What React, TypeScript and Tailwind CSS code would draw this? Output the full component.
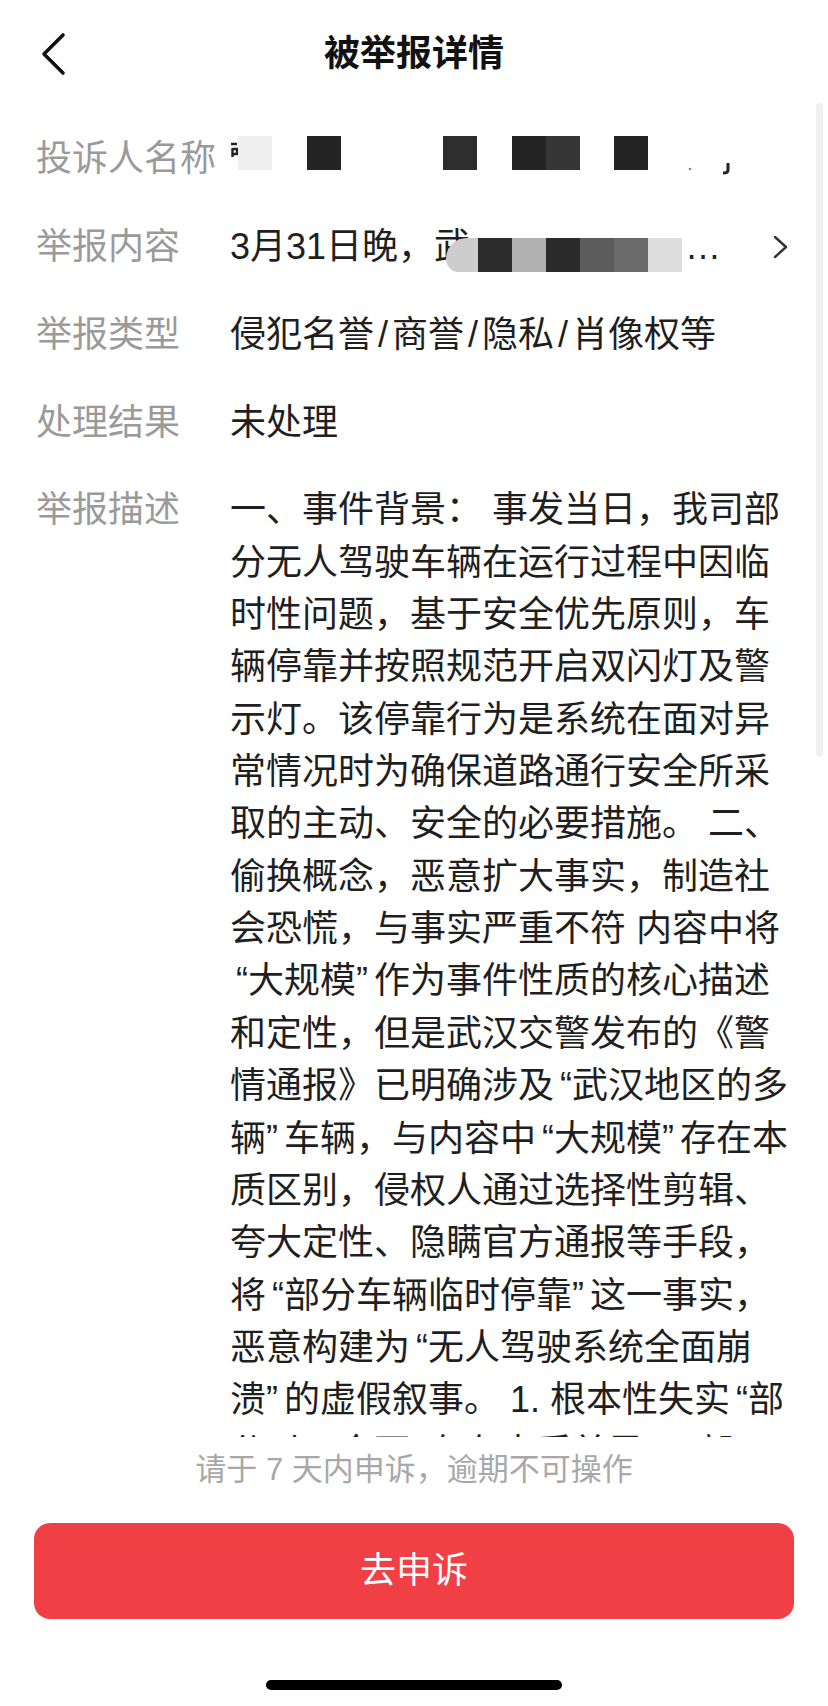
import React from "react";

const descLines = [
  "一、事件背景： 事发当日，我司部",
  "分无人驾驶车辆在运行过程中因临",
  "时性问题，基于安全优先原则，车",
  "辆停靠并按照规范开启双闪灯及警",
  "示灯。该停靠行为是系统在面对异",
  "常情况时为确保道路通行安全所采",
  "取的主动、安全的必要措施。 二、",
  "偷换概念，恶意扩大事实，制造社",
  "会恐慌，与事实严重不符 内容中将",
  "“大规模”作为事件性质的核心描述",
  "和定性，但是武汉交警发布的《警",
  "情通报》已明确涉及“武汉地区的多",
  "辆”车辆，与内容中“大规模”存在本",
  "质区别，侵权人通过选择性剪辑、",
  "夸大定性、隐瞒官方通报等手段，",
  "将“部分车辆临时停靠”这一事实，",
  "恶意构建为“无人驾驶系统全面崩",
  "溃”的虚假叙事。 1. 根本性失实“部",
  "分”与“全面”存在本质差异。“部",
];

// mosaic pieces over the complainant name
const nameMosaic: { w: number; bg?: string }[] = [
  { w: 34, bg: "#efefef" },
  { w: 35 },
  { w: 34, bg: "#242424" },
  { w: 102 },
  { w: 34, bg: "#2e2e2e" },
  { w: 35 },
  { w: 34, bg: "#242424" },
  { w: 34, bg: "#363636" },
  { w: 34 },
  { w: 34, bg: "#242424" },
];

const contentMosaic = ["#2b2b2b", "#b0b0b0", "#2a2a2a", "#5c5c5c", "#6b6b6b", "#dddddd"];

// the app font sets quotes and slashes wider than Liberation does
function Punct({ text }: { text: string }) {
  const parts = text.split(/([“”/])/);
  return (
    <>
      {parts.map((p, i) => {
        if (p === "“") return <span key={i} className="pl-[6px]">“</span>;
        if (p === "”") return <span key={i} className="pr-[6px]">”</span>;
        if (p === "/") return <span key={i} className="px-[4px]">/</span>;
        return <React.Fragment key={i}>{p}</React.Fragment>;
      })}
    </>
  );
}

function Label({ children }: { children: React.ReactNode }) {
  return <div className="text-[#9a9a9a] whitespace-nowrap">{children}</div>;
}

export default function App() {
  return (
    <div className="w-[828px] h-[1706px] bg-white flex flex-col overflow-hidden font-['Liberation_Sans','Noto_Sans_CJK_SC',sans-serif] text-[36px] leading-[52.35px] text-[#1f1f1f]">
      {/* Header */}
      <header className="h-[100px] shrink-0 pt-2 grid grid-cols-[1fr_auto_1fr] items-center px-[40px]">
        <button className="justify-self-start w-[30px] h-[46px] flex items-center">
          <svg width="26" height="44" viewBox="0 0 26 44" fill="none">
            <path d="M23 3 L4 22 L23 41" stroke="#111" strokeWidth="3.6" strokeLinecap="round" strokeLinejoin="round" />
          </svg>
        </button>
        <h1 className="font-bold text-[#111] text-[36px]">被举报详情</h1>
        <div />
      </header>

      {/* Scroll area */}
      <main className="relative h-[1337px] shrink-0 overflow-hidden">
        <div className="pt-[33px] pl-[36px] pr-[36px] flex flex-col gap-[35.5px]">
          <div className="grid grid-cols-[194px_1fr]">
            <Label>投诉人名称</Label>
            <div className="flex items-start h-[52px]">
              <svg width="8" height="52" viewBox="0 0 8 52" className="shrink-0">
                <path d="M1 11 H7 M2.5 15 V24 M2.5 16 H7 V21 H2.5" stroke="#222" strokeWidth="2.4" fill="none" />
              </svg>
              {nameMosaic.map((m, i) => (
                <div
                  key={i}
                  className="h-[34px] mt-[3px] shrink-0"
                  style={{ width: m.w, background: m.bg ?? "transparent" }}
                />
              ))}
              <svg width="50" height="52" viewBox="0 0 50 52" className="shrink-0 ml-[38px]">
                <circle cx="4" cy="36" r="1.3" fill="#888" />
                <path d="M42 30 V37 Q42 40 37 40" stroke="#222" strokeWidth="3" fill="none" />
              </svg>
            </div>
          </div>

          <div className="grid grid-cols-[194px_1fr]">
            <Label>举报内容</Label>
            <div className="flex items-center h-[52px] whitespace-nowrap">
              <span>3月31日晚，武</span>
              <div className="flex self-start mt-[17px] -ml-[24px] relative">
                <div className="w-[32px] h-[34px] bg-[#cdcdcd] rounded-tl-[22px] rounded-bl-[14px]" />
                {contentMosaic.map((c, i) => (
                  <div key={i} className="w-[34px] h-[34px]" style={{ background: c }} />
                ))}
              </div>
              <span className="ml-[3px]">…</span>
              <svg width="16" height="24" viewBox="0 0 16 24" className="ml-auto mr-[3px] shrink-0">
                <path d="M2 2 L13 12 L2 22" stroke="#333" strokeWidth="2.4" fill="none" strokeLinecap="round" strokeLinejoin="round" />
              </svg>
            </div>
          </div>

          <div className="grid grid-cols-[194px_1fr]">
            <Label>举报类型</Label>
            <div className="whitespace-nowrap">
              <Punct text="侵犯名誉/商誉/隐私/肖像权等" />
            </div>
          </div>

          <div className="grid grid-cols-[194px_1fr]">
            <Label>处理结果</Label>
            <div>未处理</div>
          </div>

          <div className="grid grid-cols-[194px_1fr]">
            <Label>举报描述</Label>
            <div className="whitespace-nowrap">
              {descLines.map((l, i) => (
                <span key={i} className="block">
                  <Punct text={l} />
                </span>
              ))}
            </div>
          </div>
        </div>

        {/* scroll indicator */}
        <div className="absolute right-[5px] top-[3px] w-[7px] h-[654px] rounded-full bg-[#f0f0f0]" />
      </main>

      {/* Footer */}
      <footer className="flex flex-col items-center">
        <p className="mt-[13px] text-[31px] leading-[40px] text-[#a8a8a8]">请于 7 天内申诉，逾期不可操作</p>
        <button className="mt-[33px] w-[760px] h-[96px] rounded-[16px] bg-[#f04046] text-white text-[36px] flex items-center justify-center">
          去申诉
        </button>
        <div className="mt-[61px] w-[296px] h-[10px] rounded-full bg-black" />
      </footer>
    </div>
  );
}
